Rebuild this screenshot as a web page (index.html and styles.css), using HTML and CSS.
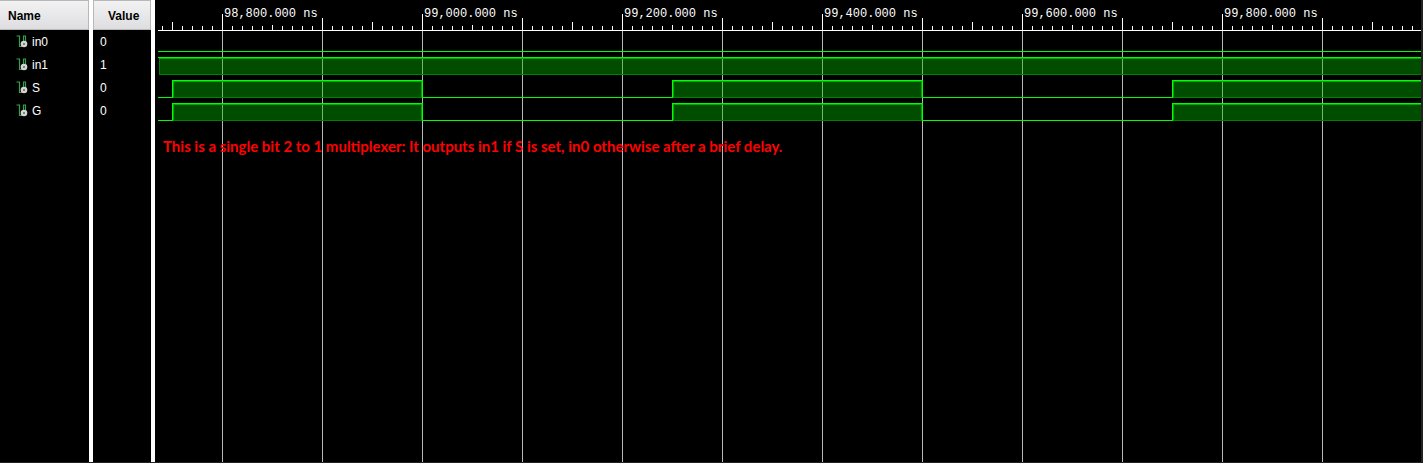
FILE: index.html
```html
<!DOCTYPE html>
<html lang="en">
<head>
<meta charset="utf-8">
<title>Waveform viewer</title>
<link rel="stylesheet" href="styles.css">
</head>
<body>
<svg class="defs" aria-hidden="true">
  <symbol id="signal" viewBox="0 0 12 13">
    <path d="M0.500 1H3.500V11.500H6M7.500 7V1H9.500V7" fill="none" stroke="#35a047" stroke-width="1.200"/>
    <circle cx="8" cy="9" r="3.300" fill="#d4d4d4"/>
    <circle cx="8" cy="9" r="1" fill="#666"/>
  </symbol>
</svg>
<main class="viewer">
  <section class="column names">
    <h2 class="heading">Name</h2>
    <ul class="list">
      <li class="signal"><svg class="icon"><use href="#signal"/></svg>in0</li>
      <li class="signal"><svg class="icon"><use href="#signal"/></svg>in1</li>
      <li class="signal"><svg class="icon"><use href="#signal"/></svg>S</li>
      <li class="signal"><svg class="icon"><use href="#signal"/></svg>G</li>
    </ul>
  </section>
  <section class="column values">
    <h2 class="heading">Value</h2>
    <ul class="list">
      <li class="signal">0</li>
      <li class="signal">1</li>
      <li class="signal">0</li>
      <li class="signal">0</li>
    </ul>
  </section>
  <section class="waves">
    <svg class="plot" role="img" aria-label="Signal waveforms">
      <defs>
        <pattern id="minor" x="4" y="26" width="10" height="5" patternUnits="userSpaceOnUse">
          <rect class="tick" width="1" height="5"/>
        </pattern>
        <pattern id="ruler" x="64" y="0" width="200" height="31" patternUnits="userSpaceOnUse">
          <rect class="tick" y="14" width="1" height="17"/>
          <rect class="tick" x="50" y="25" width="1" height="6"/>
          <rect class="tick" x="100" y="18" width="1" height="13"/>
          <rect class="tick" x="150" y="22" width="1" height="9"/>
          <rect class="tick" y="30" width="200" height="1"/>
        </pattern>
        <pattern id="grid" x="64" y="0" width="100" height="100" patternUnits="userSpaceOnUse">
          <rect class="gridline" width="1" height="100"/>
        </pattern>
      </defs>
      <rect y="26" width="100%" height="5" fill="url(#minor)"/>
      <rect width="100%" height="31" fill="url(#ruler)"/>
      <g class="times">
        <text x="66" y="17">98,800.000 ns</text>
        <text x="266" y="17">99,000.000 ns</text>
        <text x="466" y="17">99,200.000 ns</text>
        <text x="666" y="17">99,400.000 ns</text>
        <text x="866" y="17">99,600.000 ns</text>
        <text x="1066" y="17">99,800.000 ns</text>
      </g>
      <rect y="31" width="100%" height="100%" fill="url(#grid)"/>
      <g class="fill">
        <rect x="1" y="57" width="100%" height="18"/>
        <rect x="14" y="80" width="251" height="18"/>
        <rect x="514" y="80" width="251" height="18"/>
        <rect x="1014" y="80" width="100%" height="18"/>
        <rect x="14" y="103" width="251" height="18"/>
        <rect x="514" y="103" width="251" height="18"/>
        <rect x="1014" y="103" width="100%" height="18"/>
      </g>
      <path class="edge" d="M1.500 58V74.500H5000M15 97.500H264M514 97.500H764M1014 97.500H5000M15 120.500H264M514 120.500H764M1014 120.500H5000"/>
      <path class="glow" d="M1 58.500H5000M15.500 97V81.500H263.500V97M515.500 97V81.500H763.500V97M1015.500 97V81.500H5000M15.500 120V104.500H263.500V120M515.500 120V104.500H763.500V120M1015.500 120V104.500H5000"/>
      <path class="trace" d="M0 51.500H5000M0 57.500H5000M0 97.500H14.500V80.500H264.500V97.500H514.500V80.500H764.500V97.500H1014.500V80.500H5000M0 120.500H14.500V103.500H264.500V120.500H514.500V103.500H764.500V120.500H1014.500V103.500H5000"/>
      <text class="note" x="5" y="152">This is a single bit 2 to 1 multiplexer: It outputs in1 if S is set, in0 otherwise after a brief delay.</text>
    </svg>
  </section>
</main>
</body>
</html>
```
FILE: styles.css
```css
* { box-sizing: border-box; }
body {
  margin: 0;
  background: #000;
  color: #fff;
  font: 12px/23px "Liberation Sans", Arial, sans-serif;
}
.defs { position: absolute; width: 0; height: 0; }
.viewer {
  display: flex;
  min-height: 100vh;
  border-right: 2px solid #222;
  border-bottom: 1px solid #222;
}
.column { flex: none; border-right: 4px solid #fff; }
.names { width: 93px; }
.values { width: 62px; }
.heading {
  height: 30px;
  margin: 0;
  padding-left: 8px;
  border: solid #b8b8b8;
  border-width: 1px 1px 1px 0;
  background: linear-gradient(#f2f2f3, #dedee1);
  color: #000;
  font-size: 12px;
  line-height: 30px;
}
.values .heading { padding-left: 14px; border-left-width: 1px; }
.list { margin: 0; padding: 1px 0 0; list-style: none; }
.signal {
  display: flex;
  align-items: center;
  height: 23px;
  padding-left: 7px;
}
.names .signal { gap: 4px; padding-left: 16px; }
.icon { width: 12px; height: 13px; margin-bottom: 2px; }
.waves { flex: 1; display: flex; min-width: 0; padding-left: 3px; }
.plot { flex: 1; min-width: 0; height: auto; overflow: hidden; shape-rendering: crispEdges; }
.tick { fill: #fff; }
.gridline { fill: #b8b8b8; }
.fill { fill: #00c000; fill-opacity: 0.4; }
.edge { fill: none; stroke: #008000; }
.glow { fill: none; stroke: #00a800; }
.trace { fill: none; stroke: #0f0; }
.times { fill: #fff; font: 12px "Liberation Mono", monospace; }
.note { fill: #f00; font: bold 15px Lato, sans-serif; }
```
